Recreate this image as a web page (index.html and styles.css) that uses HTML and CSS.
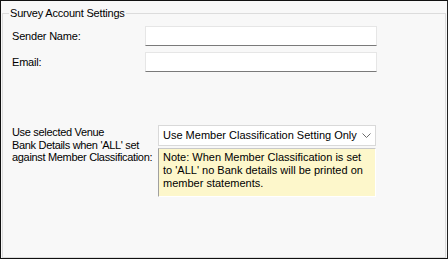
FILE: index.html
```html
<!DOCTYPE html>
<html>
<head>
<meta charset="utf-8">
<link rel="stylesheet" href="styles.css">
</head>
<body>
<div class="frame">
  <fieldset class="group">
    <legend class="group-title">Survey Account Settings</legend>
    <div class="row row-first">
      <label class="lbl">Sender Name:</label>
      <div class="textbox"></div>
    </div>
    <div class="row row-second">
      <label class="lbl">Email:</label>
      <div class="textbox"></div>
    </div>
    <div class="bank">
      <label class="bank-lbl">Use selected Venue<br>Bank Details when 'ALL' set<br>against Member Classification:</label>
      <div class="bank-right">
        <div class="combo">
          <span class="combo-text">Use Member Classification Setting Only</span>
          <svg class="chev" width="9" height="6" viewBox="0 0 9 6"><polyline points="0.5,0.5 4.5,4.5 8.5,0.5" fill="none" stroke="#6b6b6b" stroke-width="1"/></svg>
        </div>
        <div class="note">Note: When Member Classification is set<br>to 'ALL' no Bank details will be printed on<br>member statements.</div>
      </div>
    </div>
  </fieldset>
</div>
</body>
</html>
```
FILE: styles.css
```css
html, body {
  margin: 0;
  padding: 0;
  background: #f8f8f8;
}
.frame {
  width: 448px;
  height: 259px;
  box-sizing: border-box;
  border: 1px solid #111;
  border-right-color: #222;
  background: #f8f8f8;
  font-family: "Liberation Sans", Arial, sans-serif;
  font-size: 11px;
  letter-spacing: -0.2px;
  color: #000;
  display: flex;
  flex-direction: column;
}
.group {
  margin: 6px 1px 0 1px;
  padding: 0 0 0 9px;
  border: 1px solid #dcdcdc;
  flex: 1;
  min-width: 0;
}
.group-title {
  margin-left: -3px;
  padding: 0 1px;
  line-height: 13px;
  font-size: 11px;
}
.row {
  display: flex;
  align-items: center;
  height: 20px;
}
.row-first { margin-top: 6px; }
.row-second { margin-top: 6px; }
.lbl {
  width: 133px;
  flex: none;
  line-height: 13px;
}
.textbox {
  width: 232px;
  height: 20px;
  box-sizing: border-box;
  background: #fff;
  border: 1px solid #e6e6e6;
  border-bottom-color: #7a7a7a;
}
.bank {
  display: flex;
  margin-top: 53px;
}
.bank-lbl {
  width: 146px;
  flex: none;
  line-height: 12.5px;
  padding-top: 1px;
  letter-spacing: -0.32px;
}
.bank-right {
  width: 218px;
  display: flex;
  flex-direction: column;
}
.combo {
  height: 21px;
  box-sizing: border-box;
  background: #fff;
  border: 1px solid #d9d9d9;
  display: flex;
  align-items: center;
  padding-left: 4px;
  padding-right: 3px;
  letter-spacing: 0;
}
.combo-text {
  flex: 1;
  white-space: nowrap;
  overflow: hidden;
  line-height: 13px;
}
.chev {
  flex: none;
  margin-left: 2px;
  margin-right: 1px;
}
.note {
  margin-top: 2px;
  height: 49px;
  box-sizing: border-box;
  background: #fdf7cb;
  border-top: 1px solid #c8c8c8;
  border-left: 1px solid #a0a0a0;
  border-right: 1px solid #fff;
  border-bottom: 1px solid #fff;
  padding: 2px 0 0 4px;
  line-height: 13px;
  letter-spacing: 0;
  white-space: nowrap;
  overflow: hidden;
}
```
